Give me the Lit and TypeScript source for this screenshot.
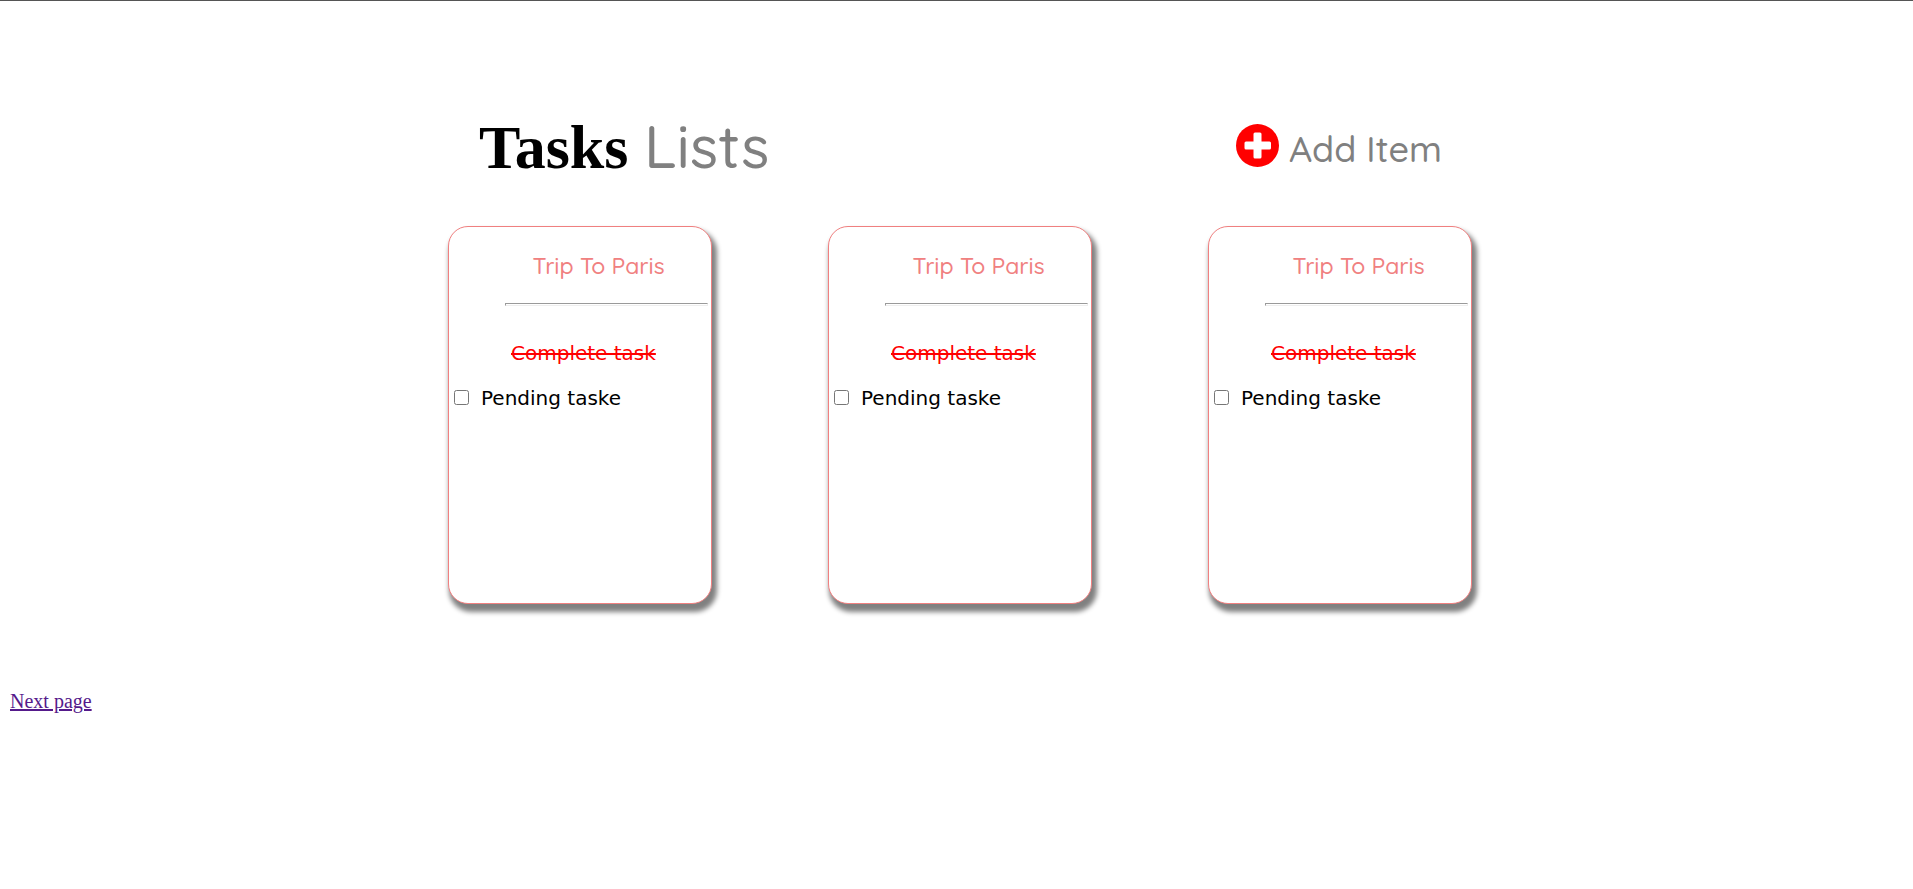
import { LitElement, html, css } from "lit";
import { customElement, property, state } from "lit/decorators.js";

interface TaskList {
  title: string;
  done: string;
  pending: string;
}

@customElement("task-card")
class TaskCard extends LitElement {
  @property({ attribute: false }) list!: TaskList;

  static styles = css`
    :host {
      display: block;
      box-sizing: border-box;
      width: 264px;
      min-height: 378px;
      padding: 23px 3px 24px 5px;
      border: 1px solid lightcoral;
      border-radius: 20px;
      background: white;
      box-shadow: 3px 6px 5px 2px gray;
      font: 20px/24px "DejaVu Sans", Verdana, sans-serif;
    }
    .title {
      margin: 0 0 0 51px;
      padding-right: 16px;
      color: lightcoral;
      font: 500 23px/32px Quicksand, Lato, sans-serif;
      text-align: center;
    }
    .rule {
      height: 1px;
      margin: 21px 0 35px 51px;
      border: 1px inset #eee;
    }
    .done {
      margin: 0 0 21px 57px;
      color: red;
      text-decoration: line-through 2px;
    }
    .pending {
      display: flex;
      align-items: center;
      gap: 12px;
    }
    .box {
      width: 15px;
      height: 15px;
      margin: 0 0 2px;
    }
  `;

  render() {
    return html`
      <h2 class="title">${this.list.title}</h2>
      <hr class="rule" />
      <p class="done">${this.list.done}</p>
      <label class="pending"><input class="box" type="checkbox" />${this.list.pending}</label>
    `;
  }
}

@customElement("app-root")
class AppRoot extends LitElement {
  @state() private lists: TaskList[] = [1, 2, 3].map(() => ({
    title: "Trip To Paris",
    done: "Complete task",
    pending: "Pending taske",
  }));

  static styles = css`
    :host {
      display: block;
      border-top: 1px solid #555;
      background: white;
    }
    .board {
      max-width: 1024px;
      margin: 0 auto;
      padding: 107px 0 0 7px;
    }
    .header {
      display: flex;
      flex-wrap: wrap;
      align-items: center;
      justify-content: space-between;
      padding: 0 30px 0 31px;
      margin-bottom: 41px;
    }
    .heading {
      margin: 0;
      font: bold 62px/76px "Liberation Serif", serif;
    }
    .light {
      color: gray;
      font: 500 60px/76px Quicksand, Lato, sans-serif;
    }
    .add {
      display: flex;
      align-items: center;
      gap: 10px;
      padding: 0;
      border: 0;
      background: none;
      color: gray;
      font: 500 36px/48px Quicksand, Lato, sans-serif;
      cursor: pointer;
    }
    .add-label {
      padding-top: 4px;
    }
    .plus {
      width: 43px;
      height: 43px;
      margin-bottom: 2px;
    }
    .cards {
      display: flex;
      flex-wrap: wrap;
      justify-content: space-between;
      gap: 32px;
    }
    .next {
      display: inline-block;
      margin: 85px 10px 0;
      color: #551a8b;
      font: 20px/24px "Liberation Serif", serif;
      text-decoration-thickness: 2px;
    }
  `;

  render() {
    return html`
      <main class="board">
        <header class="header">
          <h1 class="heading">Tasks <span class="light">Lists</span></h1>
          <button class="add" type="button">
            <svg class="plus" viewBox="0 0 43 43" aria-hidden="true">
              <circle cx="21.5" cy="21.5" r="21.5" fill="red" />
              <path
                d="M19 8.500h5a1.500 1.500 0 0 1 1.500 1.500V17.500h8a1.500 1.500 0 0 1 1.500 1.500v5a1.500 1.500 0 0 1-1.500 1.500H25.500v7.500a1.500 1.500 0 0 1-1.500 1.500h-5a1.500 1.500 0 0 1-1.500-1.500V25.500H10a1.500 1.500 0 0 1-1.500-1.500v-5a1.500 1.500 0 0 1 1.500-1.500H17.500V10a1.500 1.500 0 0 1 1.500-1.500z"
                fill="white"
              />
            </svg>
            <span class="add-label">Add Item</span>
          </button>
        </header>
        <section class="cards">
          ${this.lists.map((list) => html`<task-card .list=${list}></task-card>`)}
        </section>
      </main>
      <a class="next" href="#next">Next page</a>
    `;
  }
}
